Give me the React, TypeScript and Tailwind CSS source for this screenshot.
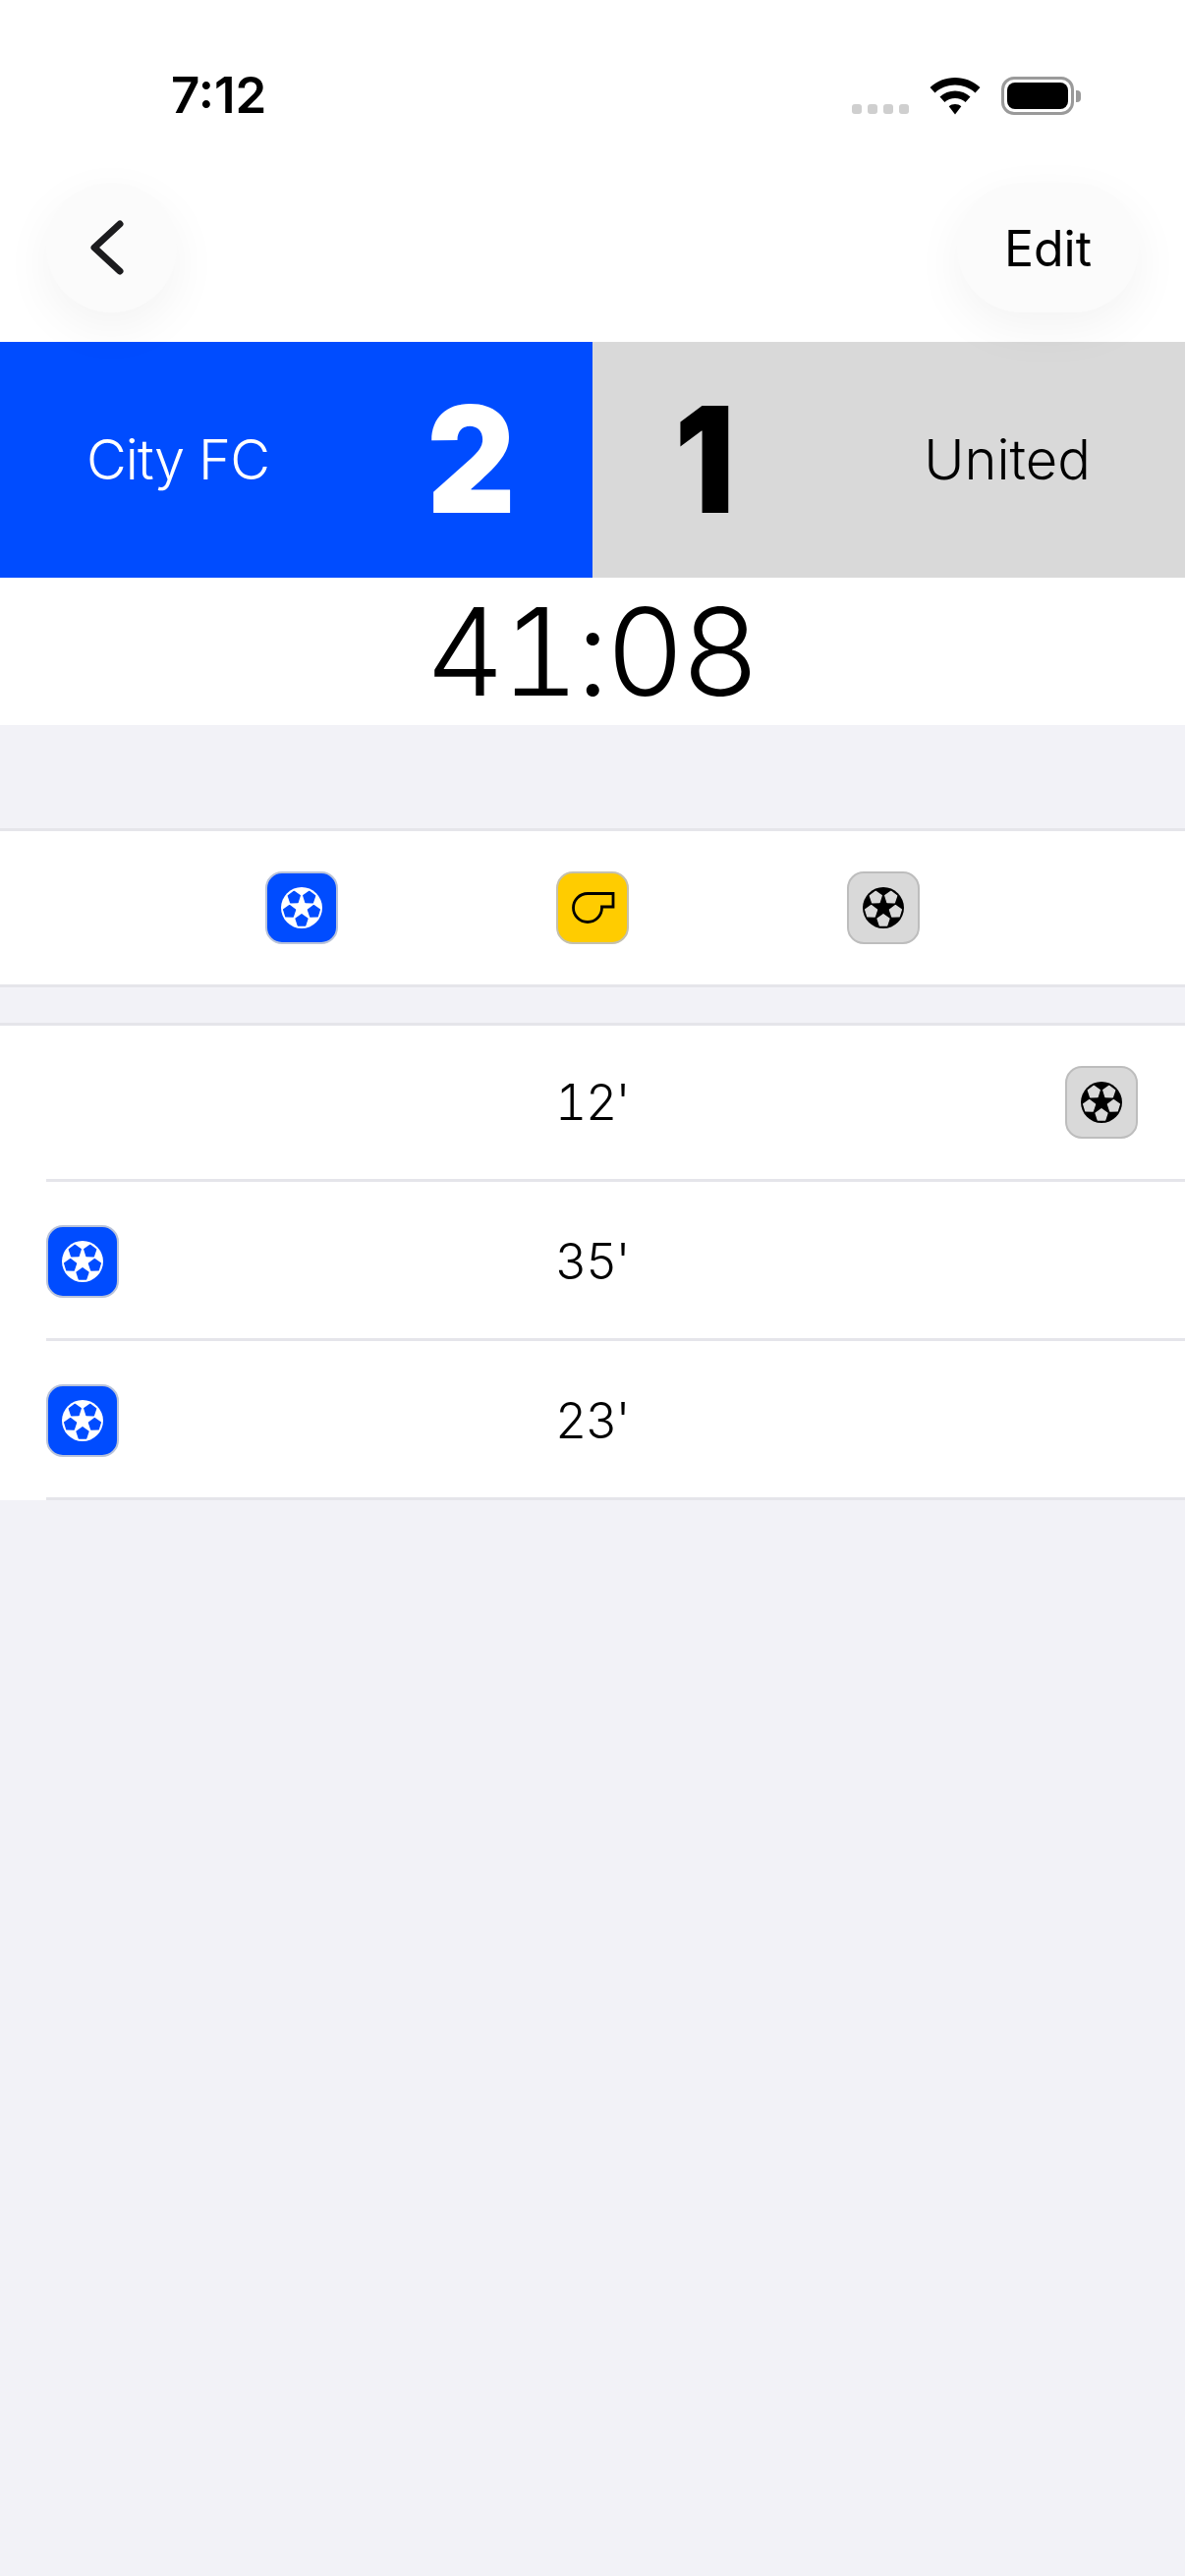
const FONT = "font-['Inter','Liberation_Sans',sans-serif]";

const slots: [number, number][] = [
  [-7.7, -10.4],
  [7.7, -10.4],
  [12.4, 3.9],
  [0, 13],
  [-12.4, 3.9],
];

function pentagon(cx: number, cy: number, r: number) {
  const base = Math.atan2(-cy, -cx);
  const pts: string[] = [];
  for (let i = 0; i < 5; i++) {
    const a = base + (i * 2 * Math.PI) / 5;
    pts.push(`${(cx + r * Math.cos(a)).toFixed(2)},${(cy + r * Math.sin(a)).toFixed(2)}`);
  }
  return pts.join(" ");
}

function Ball({ ball, patch }: { ball: string; patch: string }) {
  return (
    <svg width="42" height="42" viewBox="-21 -21 42 42">
      <circle cx="0" cy="0" r="21" fill={ball} />
      {slots.map(([x, y]) => (
        <polygon
          key={`${x}${y}`}
          points={pentagon(x, y, 6.3)}
          fill={patch}
          stroke={patch}
          strokeWidth="1.3"
          strokeLinejoin="round"
        />
      ))}
    </svg>
  );
}

function BlueBadge() {
  return (
    <div className="flex h-[74px] w-[74px] items-center justify-center rounded-[17px] border-2 border-[#b9c3d9] bg-[#004cff]">
      <Ball ball="#ffffff" patch="#004cff" />
    </div>
  );
}

function GrayBadge() {
  return (
    <div className="flex h-[74px] w-[74px] items-center justify-center rounded-[17px] border-2 border-[#bdbdbd] bg-[#d9d9d9]">
      <Ball ball="#000000" patch="#d9d9d9" />
    </div>
  );
}

function YellowBadge() {
  return (
    <div className="flex h-[74px] w-[74px] items-center justify-center rounded-[17px] border-2 border-[#c4c0ae] bg-[#ffcc00]">
      <svg width="70" height="70" viewBox="0 0 70 70">
        <path
          d="M56 20.5H30A14.5 14.5 0 1 0 44.5 35V34H56Z"
          fill="none"
          stroke="#000000"
          strokeWidth="2.8"
        />
      </svg>
    </div>
  );
}

function Row({ time, left, right, h }: { time: string; left?: boolean; right?: boolean; h: string }) {
  return (
    <div className="pl-[47px]">
      <div className={`grid grid-cols-[1fr_auto_1fr] items-center border-b-[3px] border-[#e5e5ea] ${h}`}>
        <div className="flex justify-start">{left && <BlueBadge />}</div>
        <div className="text-[50px] leading-none font-light tracking-[-1.5px] text-black tabular-nums">{time}</div>
        <div className="flex justify-end">{right && <GrayBadge />}</div>
      </div>
    </div>
  );
}

export default function App() {
  return (
    <div className={`flex h-[2622px] w-[1206px] flex-col overflow-hidden bg-[#f2f2f7] ${FONT}`}>
      <div className="relative z-10 h-[348px] bg-white">
        <div className="flex h-[186px] items-start justify-between pt-[72px] pr-[106px] pl-[174px]">
          <div className="text-[51px] leading-[50px] font-semibold text-black">7:12</div>
          <div className="flex items-end gap-[22px] pt-[6px]">
            <div className="flex gap-[6px] pb-[1px]">
              <span className="h-[10px] w-[10px] rounded-[3px] bg-[#cfcfcf]" />
              <span className="h-[10px] w-[10px] rounded-[3px] bg-[#cfcfcf]" />
              <span className="h-[10px] w-[10px] rounded-[3px] bg-[#cfcfcf]" />
              <span className="h-[10px] w-[10px] rounded-[3px] bg-[#cfcfcf]" />
            </div>
            <svg width="52" height="38" viewBox="0 0 52 38" className="-ml-[1px]">
              <path d="M26 0C35.5 0 44.5 3.6 51.5 10L46.5 15.5C40.8 10.4 33.6 7.6 26 7.6S11.2 10.4 5.5 15.5L.5 10C7.5 3.6 16.5 0 26 0Z" fill="#000" />
              <path d="M26 13.5C31.8 13.5 37.2 15.7 41.5 19.5L36.6 25C33.6 22.4 30 21 26 21S18.4 22.4 15.4 25L10.5 19.5C14.8 15.7 20.2 13.5 26 13.5Z" fill="#000" />
              <path d="M26 27C28.4 27 30.6 27.9 32.3 29.3L26 37.5L19.7 29.3C21.4 27.9 23.6 27 26 27Z" fill="#000" />
            </svg>
            <div className="-ml-[1px] flex items-center gap-[2px]">
              <div className="flex h-[39px] w-[74px] items-center justify-center rounded-[13px] border-[3px] border-[#9a9a9a]">
                <div className="h-[27px] w-[62px] rounded-[8px] bg-black" />
              </div>
              <div className="h-[12px] w-[5px] rounded-r-[4px] bg-[#9a9a9a]" />
            </div>
          </div>
        </div>
        <div className="flex items-start justify-between px-[47px]">
          <button className="flex h-[132px] w-[133px] items-center justify-center rounded-full bg-[#fbfbfb] shadow-[0_16px_50px_rgba(0,0,0,0.05)]">
            <svg width="44" height="62" viewBox="0 0 44 62" className="-ml-[10px]">
              <path d="M35 7L9 31L35 55" fill="none" stroke="#1c1c1e" strokeWidth="7" strokeLinecap="round" strokeLinejoin="round" />
            </svg>
          </button>
          <button className="flex h-[132px] w-[185px] items-center justify-center rounded-[66px] bg-[#fbfbfb] pt-[2px] text-[50px] leading-none font-normal text-black shadow-[0_16px_50px_rgba(0,0,0,0.05)]">
            Edit
          </button>
        </div>
      </div>

      <div className="grid h-[240px] grid-cols-[603px_603px]">
        <div className="flex items-center justify-between bg-[#004cff] pr-[75px] pl-[88px] text-white">
          <span className="text-[56px] leading-none font-light tracking-[-0.9px]">City FC</span>
          <span className="inline-block scale-x-[0.93] text-[150px] leading-none font-black">2</span>
        </div>
        <div className="flex items-center justify-between bg-[#d9d9d9] pr-[96px] pl-[80px] text-black">
          <span className="inline-block scale-x-[0.9] text-[150px] leading-none font-black">1</span>
          <span className="text-[56px] leading-none font-light">United</span>
        </div>
      </div>

      <div className="flex h-[150px] items-center justify-center bg-white pr-[3px] text-[124px] leading-none font-light tracking-[-3.5px] text-black tabular-nums">
        41:08
      </div>

      <div className="mt-[105px] flex h-[162px] items-center justify-center gap-[222px] border-y-[3px] border-[#e5e5ea] bg-white">
        <BlueBadge />
        <YellowBadge />
        <GrayBadge />
      </div>

      <div className="mt-[36px] border-t-[3px] border-[#e5e5ea] bg-white">
        <Row time="12'" right h="h-[159px] pr-[48px]" />
        <Row time="35'" left h="h-[162px] pt-[2px] pr-[48px]" />
        <Row time="23'" left h="h-[162px] pt-[2px] pr-[48px]" />
      </div>
    </div>
  );
}
